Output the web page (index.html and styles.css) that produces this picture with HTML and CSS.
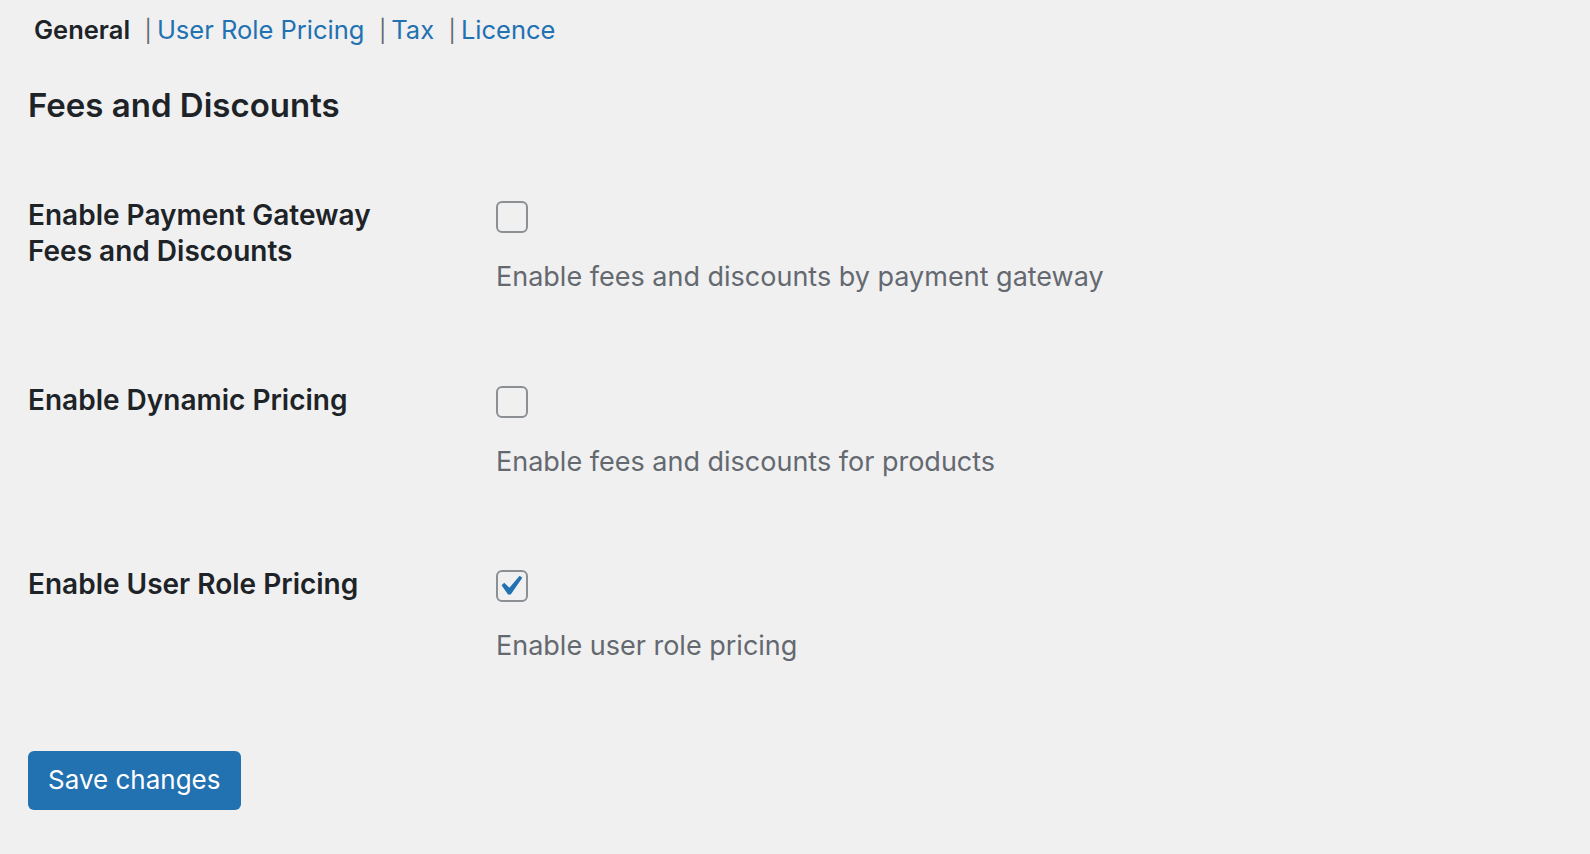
FILE: index.html
```html
<!DOCTYPE html>
<html lang="en">
<head>
  <meta charset="UTF-8">
  <title>Fees and Discounts</title>
  <link rel="stylesheet" href="styles.css">
</head>
<body>

  <ul class="subsubsub">
    <li class="current">General</li>
    <li><span class="sep">|</span><a href="#">User Role Pricing</a></li>
    <li><span class="sep">|</span><a href="#">Tax</a></li>
    <li><span class="sep">|</span><a href="#">Licence</a></li>
  </ul>

  <h2 class="section-title">Fees and Discounts</h2>

  <form class="settings">
    <div class="row">
      <label class="row-label" for="gateway">Enable Payment Gateway<br>Fees and Discounts</label>
      <div class="row-field">
        <span class="check"><input type="checkbox" id="gateway"></span>
        <p class="description">Enable fees and discounts by payment gateway</p>
      </div>
    </div>

    <div class="row">
      <label class="row-label" for="dynamic">Enable Dynamic Pricing</label>
      <div class="row-field">
        <span class="check"><input type="checkbox" id="dynamic"></span>
        <p class="description">Enable fees and discounts for products</p>
      </div>
    </div>

    <div class="row">
      <label class="row-label" for="roles">Enable User Role Pricing</label>
      <div class="row-field">
        <span class="check is-checked">
          <input type="checkbox" id="roles" checked>
          <svg class="tick" viewBox="0 0 20 20"><path d="M14.83 4.89l1.34.94-5.81 8.38H9.02L5.78 9.67l1.34-1.25 2.57 2.4z"/></svg>
        </span>
        <p class="description">Enable user role pricing</p>
      </div>
    </div>

    <div class="actions">
      <button type="button" class="button-primary">Save changes</button>
    </div>
  </form>

</body>
</html>
```

FILE: styles.css
```css
body {
  margin: 0;
  padding: 12px 28px 0 28px;
  background-color: #f0f0f1;
  color: #1d2327;
  font-family: Inter, 'Noto Sans', sans-serif;
}

.subsubsub {
  list-style: none;
  margin: 0;
  padding: 0 0 0 6px;
  display: flex;
  align-items: baseline;
  height: 36px;
  font-size: 25.5px;
  line-height: 36px;
}

.subsubsub li {
  display: flex;
  align-items: baseline;
}

.subsubsub .current {
  font-weight: 600;
}

.subsubsub a {
  color: #2271b1;
  text-decoration: none;
}

.sep {
  color: #646970;
  margin: 0 5px 0 14.5px;
  font-size: 22px;
}

.section-title {
  font-size: 33px;
  font-weight: 600;
  line-height: 44px;
  margin: 35px 0 0 0;
}

.settings {
  margin-top: 70px;
}

.row {
  display: grid;
  grid-template-columns: 468px 1fr;
  margin-bottom: 86.5px;
}

.row-label {
  font-size: 28px;
  font-weight: 600;
  line-height: 36px;
}

.row-field {
  padding-top: 4px;
}

.check {
  position: relative;
  display: block;
  width: 32px;
  height: 32px;
}

.check input {
  appearance: none;
  -webkit-appearance: none;
  margin: 0;
  width: 32px;
  height: 32px;
  border: 2px solid #8c8f94;
  border-radius: 6px;
  background: transparent;
  box-sizing: border-box;
  display: block;
}

.tick {
  position: absolute;
  left: -6px;
  top: -4px;
  width: 40px;
  height: 40px;
  fill: #2271b1;
}

.description {
  margin: 26px 0 0 0;
  font-size: 27px;
  line-height: 36px;
  color: #646970;
}

.actions {
  margin-top: 3px;
}

.button-primary {
  font-family: inherit;
  font-size: 26px;
  line-height: 36px;
  color: #fff;
  background-color: #2271b1;
  border: none;
  border-radius: 6px;
  padding: 11px 20px 12px 20px;
  cursor: pointer;
}
```
